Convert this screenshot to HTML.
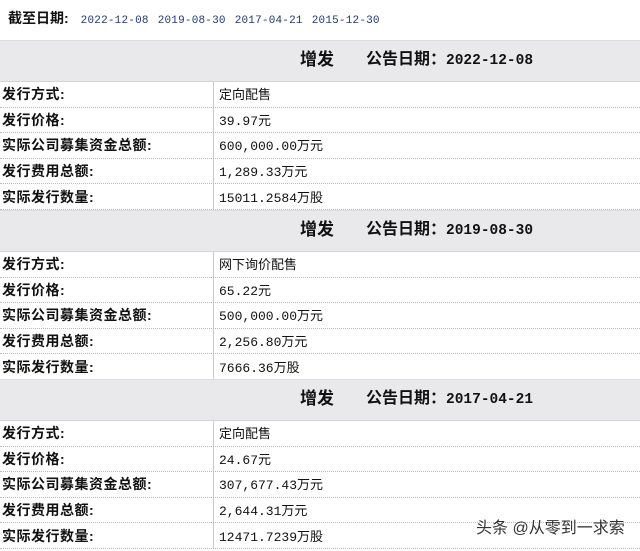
<!DOCTYPE html>
<html><head><meta charset="utf-8"><style>
body{margin:0;width:640px;height:551px;overflow:hidden;background:#fff;font-family:"Liberation Sans","Noto Sans CJK SC",sans-serif;color:#111;position:relative}
.top{position:absolute;left:0;top:0;width:640px;height:40px;font-size:12px;line-height:36px}
.top b{font-size:14px;margin-left:8px;margin-right:12px}
.top span{color:#223a6e;margin-right:9px;font-family:"Liberation Mono","Noto Sans CJK SC",monospace;font-size:11px;letter-spacing:0.2px}
.sec{position:absolute;left:0;width:640px}
.hd{height:40px;background:#e9e9eb;border-top:1px solid #ddd;border-bottom:1px solid #d4d4d4;font-weight:bold;font-size:16px;line-height:38px;position:relative}
.hd .a{position:absolute;left:300px;font-size:17px}
.hd .b{position:absolute;left:366px}
.hd .b i{font-style:normal;font-family:"Liberation Mono",monospace;font-size:14.5px}
.r{height:25.6px;box-sizing:border-box;border-bottom:1px dotted #bbb;display:flex;align-items:stretch}
.r .l{width:214px;border-right:1px solid #ccc;font-weight:bold;font-size:14px;letter-spacing:0.5px;padding-left:2px;box-sizing:border-box;display:flex;align-items:center}
.r .v{padding-left:5px;font-size:13px;font-family:"Liberation Mono","Noto Sans CJK SC",monospace;display:flex;align-items:center;line-height:14px;position:relative;top:2px}
.wm{position:absolute;left:476px;top:514px;font-size:16px;color:#333;text-shadow:0 0 2px #fff}
</style></head><body>
<div class="top"><b>截至日期:</b><span>2022-12-08</span><span>2019-08-30</span><span>2017-04-21</span><span>2015-12-30</span></div>

<div class="sec" style="top:40px">
<div class="hd"><span class="a">增发</span><span class="b">公告日期：<i>2022-12-08</i></span></div>
<div class="r"><div class="l">发行方式:</div><div class="v">定向配售</div></div>
<div class="r"><div class="l">发行价格:</div><div class="v">39.97元</div></div>
<div class="r"><div class="l">实际公司募集资金总额:</div><div class="v">600,000.00万元</div></div>
<div class="r"><div class="l">发行费用总额:</div><div class="v">1,289.33万元</div></div>
<div class="r"><div class="l">实际发行数量:</div><div class="v">15011.2584万股</div></div>
</div>

<div class="sec" style="top:210px">
<div class="hd"><span class="a">增发</span><span class="b">公告日期：<i>2019-08-30</i></span></div>
<div class="r"><div class="l">发行方式:</div><div class="v">网下询价配售</div></div>
<div class="r"><div class="l">发行价格:</div><div class="v">65.22元</div></div>
<div class="r"><div class="l">实际公司募集资金总额:</div><div class="v">500,000.00万元</div></div>
<div class="r"><div class="l">发行费用总额:</div><div class="v">2,256.80万元</div></div>
<div class="r"><div class="l">实际发行数量:</div><div class="v">7666.36万股</div></div>
</div>

<div class="sec" style="top:379px">
<div class="hd"><span class="a">增发</span><span class="b">公告日期：<i>2017-04-21</i></span></div>
<div class="r"><div class="l">发行方式:</div><div class="v">定向配售</div></div>
<div class="r"><div class="l">发行价格:</div><div class="v">24.67元</div></div>
<div class="r"><div class="l">实际公司募集资金总额:</div><div class="v">307,677.43万元</div></div>
<div class="r"><div class="l">发行费用总额:</div><div class="v">2,644.31万元</div></div>
<div class="r"><div class="l">实际发行数量:</div><div class="v">12471.7239万股</div></div>
</div>
<div class="wm">头条 @从零到一求索</div>
</body></html>
